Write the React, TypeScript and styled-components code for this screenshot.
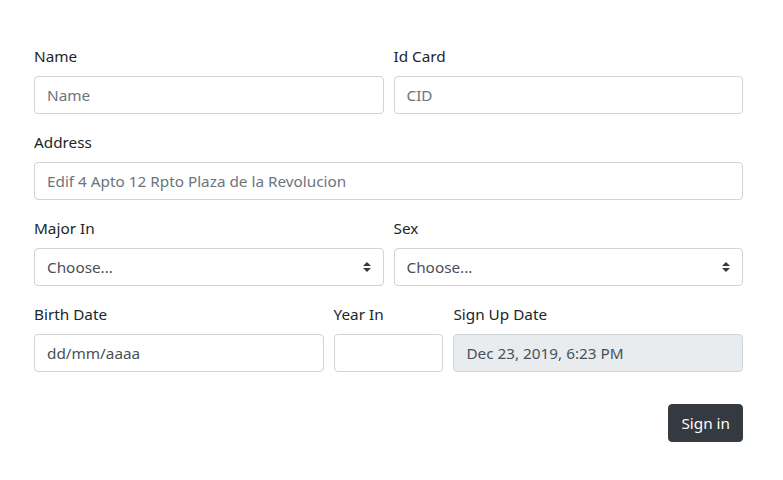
import React from 'react';
import styled, { createGlobalStyle } from 'styled-components';

const GlobalStyle = createGlobalStyle`
  html, body {
    margin: 0;
    padding: 0;
    background: #fff;
  }
  body {
    font-family: "Noto Sans", "Open Sans", "Liberation Sans", sans-serif;
    font-size: 15.3px;
    line-height: 1.5;
    color: #212529;
  }
  * { box-sizing: border-box; }
`;

const Page = styled.div`
  padding: 44px 40px 30px 34px;
`;

const Form = styled.form`
  display: flex;
  flex-direction: column;
`;

// bootstrap-like columns: span out of 12, gutter 10px
const col = (span: number) => `calc((100% + 10px) * ${span} / 12 - 10px)`;

const Row = styled.div<{ $spans: number[] }>`
  display: grid;
  grid-template-columns: ${p => p.$spans.map(col).join(' ')};
  column-gap: 10px;
`;

const Group = styled.div`
  display: flex;
  flex-direction: column;
  margin-bottom: 16px;
  min-width: 0;
`;

const Label = styled.label`
  display: block;
  margin-bottom: 8px;
  line-height: 24px;
  color: #212529;
`;

const Input = styled.input`
  display: block;
  width: 100%;
  height: 38px;
  padding: 6px 12px;
  font: inherit;
  line-height: 24px;
  color: #495057;
  background: #fff;
  border: 1px solid #ced4da;
  border-radius: 4px;
  outline: none;

  &::placeholder {
    color: #6c757d;
    opacity: 1;
  }

  &:disabled {
    background: #e9ecef;
    color: #495057;
    opacity: 1;
  }
`;

const Select = styled.select`
  display: block;
  width: 100%;
  height: 38px;
  padding: 6px 28px 6px 12px;
  font: inherit;
  line-height: 24px;
  color: #495057;
  border: 1px solid #ced4da;
  border-radius: 4px;
  appearance: none;
  outline: none;
  background: #fff url("data:image/svg+xml,%3csvg xmlns='http://www.w3.org/2000/svg' width='4' height='5' viewBox='0 0 4 5'%3e%3cpath fill='%23343a40' d='M2 0L0 2h4zm0 5L0 3h4z'/%3e%3c/svg%3e") no-repeat right 12px center / 8px 10px;
`;

const Actions = styled.div`
  display: flex;
  justify-content: flex-end;
  padding-top: 16px;
`;

const Button = styled.button`
  height: 38px;
  padding: 6px 12px;
  font: inherit;
  line-height: 24px;
  color: #fff;
  background: #343a40;
  border: 1px solid #343a40;
  border-radius: 4px;
  cursor: pointer;
`;

export default function App() {
  return (
    <>
      <GlobalStyle />
      <Page>
        <Form onSubmit={e => e.preventDefault()}>
          <Row $spans={[6, 6]}>
            <Group>
              <Label htmlFor="name">Name</Label>
              <Input id="name" placeholder="Name" />
            </Group>
            <Group>
              <Label htmlFor="cid">Id Card</Label>
              <Input id="cid" placeholder="CID" />
            </Group>
          </Row>
          <Row $spans={[12]}>
            <Group>
              <Label htmlFor="address">Address</Label>
              <Input id="address" placeholder="Edif 4 Apto 12 Rpto Plaza de la Revolucion" />
            </Group>
          </Row>
          <Row $spans={[6, 6]}>
            <Group>
              <Label htmlFor="major">Major In</Label>
              <Select id="major" defaultValue="">
                <option value="">Choose...</option>
              </Select>
            </Group>
            <Group>
              <Label htmlFor="sex">Sex</Label>
              <Select id="sex" defaultValue="">
                <option value="">Choose...</option>
              </Select>
            </Group>
          </Row>
          <Row $spans={[5, 2, 5]}>
            <Group>
              <Label htmlFor="birth">Birth Date</Label>
              <Input id="birth" defaultValue="dd/mm/aaaa" />
            </Group>
            <Group>
              <Label htmlFor="year">Year In</Label>
              <Input id="year" />
            </Group>
            <Group>
              <Label htmlFor="signup">Sign Up Date</Label>
              <Input id="signup" disabled value="Dec 23, 2019, 6:23 PM" readOnly />
            </Group>
          </Row>
          <Actions>
            <Button type="submit">Sign in</Button>
          </Actions>
        </Form>
      </Page>
    </>
  );
}
